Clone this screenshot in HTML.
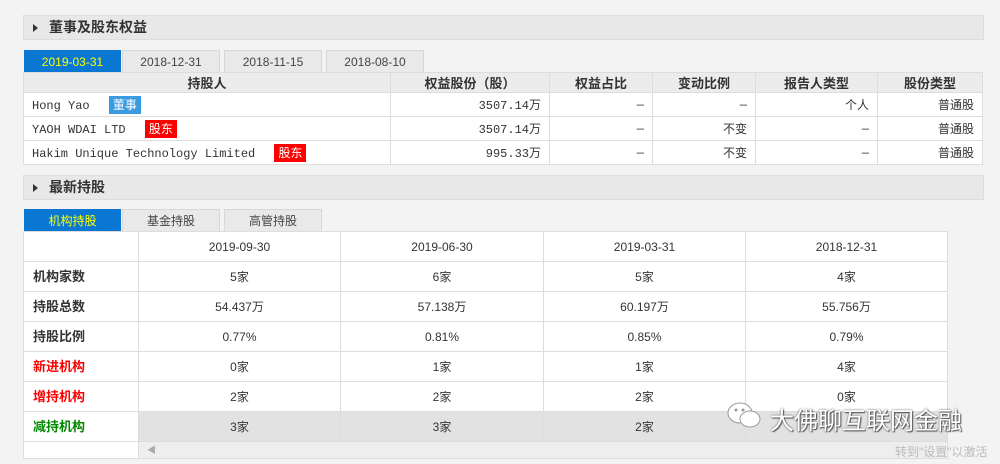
<!DOCTYPE html>
<html><head><meta charset="utf-8"><style>
*{margin:0;padding:0;box-sizing:border-box}
body{width:1000px;height:464px;background:#f3f3f3;font-family:"Liberation Sans","Noto Sans CJK SC",sans-serif;font-size:12px;color:#333;position:relative;overflow:hidden}
.a{position:absolute}
.bar{left:23px;width:961px;height:25px;background:#e8e8e8;border:1px solid #ddd;font-weight:bold;font-size:14px;line-height:23px;padding-left:25px;color:#333}
.bar:before{content:"";position:absolute;left:9px;top:8px;border-left:5px solid #333;border-top:4px solid transparent;border-bottom:4px solid transparent}
.tab{height:22px;background:#e9e9e9;border:1px solid #d8d8d8;border-bottom:none;text-align:center;line-height:22px;color:#444}
.tab.on{background:#0a78d2;color:#ff0;border-color:#0a78d2}
table{position:absolute;border-collapse:collapse;background:#fff}
td,th{border:1px solid #ddd;padding:0 8px}
th{background:#ececec;font-weight:bold;font-size:13px;height:20px}
.t1 td{height:24px;text-align:right;font-family:"Liberation Mono","Noto Sans CJK SC",monospace}
.t1 td.l{text-align:left}
.dash{font-family:"Noto Sans CJK SC",sans-serif}
.tag{display:inline-block;color:#fff;padding:0 4px;line-height:18px;margin-left:12px;font-family:"Noto Sans CJK SC",sans-serif;font-size:12px}
.t2 td{height:30px;line-height:28px;padding-top:0;padding-bottom:0;text-align:center}
.t2 td.h{text-align:left;font-weight:bold;font-size:13px;padding-left:9px}
.g td.v{background:#e2e2e2}
</style></head><body>
<div class="a bar" style="top:15px">董事及股东权益</div>
<div class="a tab on" style="left:24px;top:50px;width:97px">2019-03-31</div>
<div class="a tab" style="left:122px;top:50px;width:98px">2018-12-31</div>
<div class="a tab" style="left:224px;top:50px;width:98px">2018-11-15</div>
<div class="a tab" style="left:326px;top:50px;width:98px">2018-08-10</div>
<table class="t1" style="left:23px;top:72px;width:960px">
<tr><th style="width:367px">持股人</th><th style="width:159px">权益股份（股）</th><th style="width:103px">权益占比</th><th style="width:103px">变动比例</th><th style="width:122px">报告人类型</th><th>股份类型</th></tr>
<tr><td class="l">Hong Yao <span class="tag" style="background:#3a9ae0">董事</span></td><td>3507.14万</td><td class="dash">—</td><td class="dash">—</td><td>个人</td><td>普通股</td></tr>
<tr><td class="l">YAOH WDAI LTD <span class="tag" style="background:#f00">股东</span></td><td>3507.14万</td><td class="dash">—</td><td>不变</td><td class="dash">—</td><td>普通股</td></tr>
<tr><td class="l">Hakim Unique Technology Limited <span class="tag" style="background:#f00">股东</span></td><td>995.33万</td><td class="dash">—</td><td>不变</td><td class="dash">—</td><td>普通股</td></tr>
</table>
<div class="a bar" style="top:175px">最新持股</div>
<div class="a tab on" style="left:24px;top:209px;width:97px">机构持股</div>
<div class="a tab" style="left:122px;top:209px;width:98px">基金持股</div>
<div class="a tab" style="left:224px;top:209px;width:98px">高管持股</div>
<table class="t2" style="left:23px;top:231px;width:925px">
<tr><td style="width:115px"></td><td style="width:202px">2019-09-30</td><td style="width:203px">2019-06-30</td><td style="width:202px">2019-03-31</td><td>2018-12-31</td></tr>
<tr><td class="h">机构家数</td><td>5家</td><td>6家</td><td>5家</td><td>4家</td></tr>
<tr><td class="h">持股总数</td><td>54.437万</td><td>57.138万</td><td>60.197万</td><td>55.756万</td></tr>
<tr><td class="h">持股比例</td><td>0.77%</td><td>0.81%</td><td>0.85%</td><td>0.79%</td></tr>
<tr><td class="h" style="color:#f00">新进机构</td><td>0家</td><td>1家</td><td>1家</td><td>4家</td></tr>
<tr><td class="h" style="color:#f00">增持机构</td><td>2家</td><td>2家</td><td>2家</td><td>0家</td></tr>
<tr class="g"><td class="h" style="color:#080">减持机构</td><td class="v">3家</td><td class="v">3家</td><td class="v">2家</td><td class="v"></td></tr>
<tr><td style="height:17px;line-height:15px"></td><td colspan="4" style="height:17px;line-height:15px;background:#eee;text-align:left;color:#aaa;font-size:9px">◀</td></tr>
</table>
<div class="a" style="left:725px;top:400px;width:40px;height:32px">
<svg width="40" height="32" viewBox="0 0 40 32"><ellipse cx="15" cy="13" rx="12" ry="10" fill="#fff" stroke="#999"/><ellipse cx="25" cy="19" rx="10" ry="8" fill="#fff" stroke="#999"/><circle cx="11" cy="10" r="1.5" fill="#999"/><circle cx="18" cy="10" r="1.5" fill="#999"/></svg></div>
<div class="a" style="left:770px;top:401px;font-size:24px;color:#fff;text-shadow:0 0 2px #555,1px 1px 1px #555;font-family:'Noto Sans CJK SC',sans-serif">大佛聊互联网金融</div>
<div class="a" style="left:895px;top:443px;font-size:12px;color:#bbb">转到"设置"以激活</div>
</body></html>
